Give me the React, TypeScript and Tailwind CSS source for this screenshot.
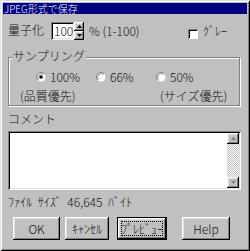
import React from "react";

const raised =
  "shadow-[inset_-1px_-1px_0_#000,inset_1px_1px_0_#fff,inset_-2px_-2px_0_#808080,inset_2px_2px_0_#dfdfdf]";
const sunken =
  "shadow-[inset_1px_1px_0_#808080,inset_-1px_-1px_0_#fff,inset_2px_2px_0_#000,inset_-2px_-2px_0_#dfdfdf]";

function Radio({ checked }: { checked?: boolean }) {
  return (
    <svg width="10" height="10" viewBox="0 0 10 10" className="shrink-0">
      <circle cx="5" cy="5" r="4.5" fill="#fff" />
      <path d="M1.8 8.2 A4.5 4.5 0 0 1 8.2 1.8" stroke="#808080" strokeWidth="1" fill="none" />
      <path d="M2.6 7.4 A3.4 3.4 0 0 1 7.4 2.6" stroke="#000" strokeWidth="0.8" fill="none" opacity="0.5" />
      {checked && <circle cx="5" cy="5" r="1.8" fill="#000" />}
    </svg>
  );
}

function Tri({ down, color = "#000" }: { down?: boolean; color?: string }) {
  return (
    <svg width="5" height="3" viewBox="0 0 5 3">
      {down ? <path d="M0 0 H5 L2.5 3 Z" fill={color} /> : <path d="M0 3 H5 L2.5 0 Z" fill={color} />}
    </svg>
  );
}

export default function App() {
  return (
    <div
      className={`w-[250px] h-[251px] bg-[#c0c0c0] p-[3px] flex flex-col text-[12px] leading-[12px] font-light text-[#111] font-['Noto_Sans_CJK_JP',sans-serif] shadow-[inset_1px_1px_0_#dfdfdf,inset_-1px_-1px_0_#000,inset_2px_2px_0_#fff,inset_-2px_-2px_0_#808080]`}
    >
      <div className="h-[11px] bg-[#000080] text-white text-[10px] leading-[11px] pl-[1px] whitespace-nowrap">
        JPEG形式で保存
      </div>

      {/* Row 1 */}
      <div className="mt-[8px] h-[18px] flex items-start whitespace-nowrap">
        <div className="w-[48px] pl-[5px] mt-[2px]">量子化</div>
        <div className={`w-[23px] h-[18px] bg-white ${sunken} pl-[3px] pt-[3px]`}>100</div>
        <div className="w-[10px] h-[18px] flex flex-col">
          <div className={`h-[9px] bg-[#c0c0c0] ${raised} flex items-center justify-center`}>
            <Tri />
          </div>
          <div className={`h-[9px] bg-[#c0c0c0] ${raised} flex items-center justify-center`}>
            <Tri down />
          </div>
        </div>
        <div className="w-[104px] pl-[5px] mt-[3px]">% (1-100)</div>
        <div className={`w-[10px] h-[10px] mt-[7px] bg-white shadow-[inset_1px_1px_0_#808080,inset_-1px_-1px_0_#fff,inset_2px_2px_0_#000]`} />
        <div className="ml-[5px] mt-[3px]">ｸﾞﾚｰ</div>
      </div>

      {/* Group */}
      <div className="mt-[17px] ml-[5px] w-[232px] h-[49px] shrink-0 border border-[#808080] relative shadow-[inset_1px_1px_0_#fff,1px_1px_0_#fff]">
        <div className="absolute left-[3px] top-[-8px] px-[1px] bg-[#c0c0c0] whitespace-nowrap">サンプリング</div>
        <div className="mt-[13px] pl-[27px] flex h-[12px] whitespace-nowrap">
          <div className="w-[60px] flex items-center">
            <Radio checked />
            <span className="ml-[4px]">100%</span>
          </div>
          <div className="w-[60px] flex items-center">
            <Radio />
            <span className="ml-[4px]">66%</span>
          </div>
          <div className="w-[60px] flex items-center">
            <Radio />
            <span className="ml-[4px]">50%</span>
          </div>
        </div>
        <div className="mt-[7px] pl-[11px] flex whitespace-nowrap">
          <div className="w-[140px]">(品質優先)</div>
          <div>(サイズ優先)</div>
        </div>
      </div>

      <div className="mt-[7px] ml-[5px]">コメント</div>

      <div className={`mt-[6px] ml-[5px] w-[233px] h-[59px] shrink-0 bg-white ${sunken} p-[2px] flex justify-end`}>
        <div className="w-[12px] h-full flex flex-col justify-between bg-[repeating-conic-gradient(#fff_0_25%,#c0c0c0_0_50%)] bg-[length:2px_2px]">
          <div className={`h-[11px] bg-[#c0c0c0] ${raised} flex items-center justify-center`}>
            <Tri color="#808080" />
          </div>
          <div className={`h-[11px] bg-[#c0c0c0] ${raised} flex items-center justify-center`}>
            <Tri down color="#808080" />
          </div>
        </div>
      </div>

      <div className="mt-[6px] ml-[5px] whitespace-nowrap [word-spacing:3px]">ﾌｧｲﾙ ｻｲｽﾞ 46,645 ﾊﾞｲﾄ</div>

      <div className="mt-[9px] flex whitespace-nowrap">
        <div className={`ml-[10px] w-[47px] h-[23px] ${raised} flex items-center justify-center`}>OK</div>
        <div className={`ml-[5px] w-[44px] h-[23px] ${raised} flex items-center justify-center`}>ｷｬﾝｾﾙ</div>
        <div className="ml-[8px] w-[50px] h-[23px] border border-black">
          <div className={`w-full h-full ${raised} p-[3px]`}>
            <div className="w-full h-full border border-dotted border-black flex items-center justify-center">
              ﾌﾟﾚﾋﾞｭｰ
            </div>
          </div>
        </div>
        <div className={`ml-[15px] w-[48px] h-[23px] ${raised} flex items-center justify-center`}>Help</div>
      </div>
    </div>
  );
}
